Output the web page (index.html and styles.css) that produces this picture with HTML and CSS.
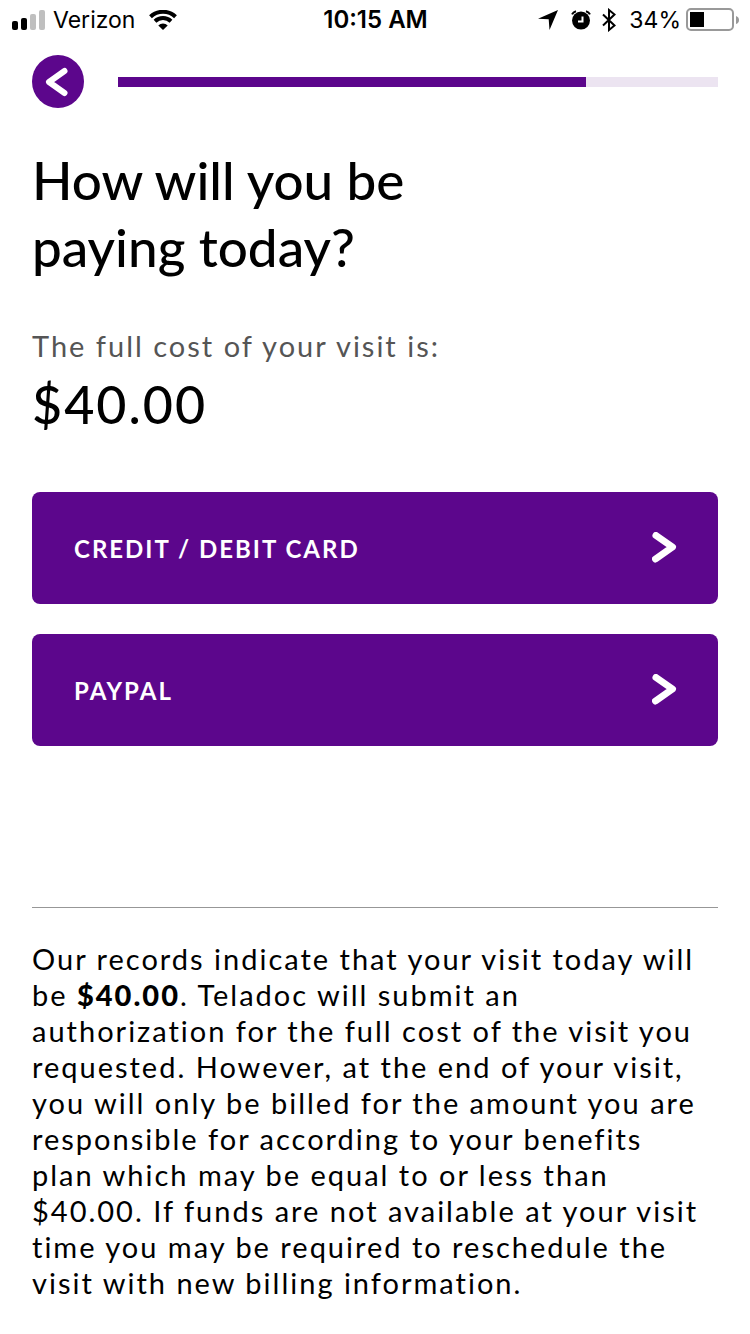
FILE: index.html
```html
<!DOCTYPE html>
<html lang="en">
<head>
<meta charset="utf-8">
<meta name="viewport" content="width=device-width, initial-scale=1">
<title>Payment</title>
<link rel="stylesheet" href="styles.css">
</head>
<body>
<header class="status">
  <div class="status-side">
    <svg class="signal" width="33" height="20" viewBox="0 0 33 20" aria-hidden="true">
      <rect x="0" y="11" width="6" height="9" rx="2"/>
      <rect x="9" y="8" width="6" height="12" rx="2"/>
      <rect class="dim" x="18" y="4" width="6" height="16" rx="2"/>
      <rect class="dim" x="27" y="0" width="6" height="20" rx="2"/>
    </svg>
    <span class="carrier">Verizon</span>
    <svg class="wifi" width="28" height="20" viewBox="0 0 28 20" aria-hidden="true">
      <path class="arc" d="M1.5 6.8a18 18 0 0 1 25 0M6 11.3a11.6 11.6 0 0 1 16 0"/>
      <path d="M14 20l-4.7-4.6a6.8 6.8 0 0 1 9.4 0z"/>
    </svg>
  </div>
  <time class="clock">10:15 AM</time>
  <div class="status-side status-right">
    <svg width="20" height="20" viewBox="0 0 20 20" aria-hidden="true"><path d="M20 0L11.5 20l-.8-10.7L0 8.7z"/></svg>
    <svg class="alarm" width="20" height="20" viewBox="0 0 20 20" aria-hidden="true">
      <circle cx="10" cy="10.6" r="9"/>
      <path class="bell" d="M1 4.4Q2.2 2 5 1.2M19 4.4Q17.800 2 15 1.200"/>
      <path class="hand" d="M11.500 6.500v5H7"/>
    </svg>
    <svg class="bluetooth" width="14" height="24" viewBox="0 0 14 24" aria-hidden="true"><path d="M1 6.500l11.500 11L7 22v-20l5.500 4.500L1 17.500"/></svg>
    <span class="percent">34%</span>
    <svg class="battery" width="53" height="24" viewBox="0 0 53 24" aria-hidden="true">
      <rect class="shell" x="1" y="1" width="46" height="21" rx="4"/>
      <rect x="4" y="4" width="14" height="15"/>
      <path class="cap" d="M50 8q3 1 3 4t-3 4z"/>
    </svg>
  </div>
</header>
<main class="page">
  <div class="nav">
    <button class="back" type="button" aria-label="Back">
      <svg width="52" height="53" viewBox="0 0 52 53" aria-hidden="true">
        <ellipse cx="26" cy="26.5" rx="26" ry="26.5"/>
        <path d="M32.500 16L17 27l15.500 11"/>
      </svg>
    </button>
    <div class="track" role="progressbar" aria-label="Progress" aria-valuenow="78" aria-valuemin="0" aria-valuemax="100"><div class="fill" style="width:78%"></div></div>
  </div>
  <h1 class="title">How will you be<br>paying today?</h1>
  <p class="label">The full cost of your visit is:</p>
  <p class="amount">$40.00</p>
  <div class="options">
    <button class="option" type="button"><span>CREDIT / DEBIT CARD</span>
      <svg width="26" height="32" viewBox="0 0 26 32" aria-hidden="true"><path d="M4 3.500L20.500 15 3.500 27"/></svg>
    </button>
    <button class="option" type="button"><span>PAYPAL</span>
      <svg width="26" height="32" viewBox="0 0 26 32" aria-hidden="true"><path d="M4 3.500L20.500 15 3.500 27"/></svg>
    </button>
  </div>
  <p class="note">Our records indicate that your visit today will<br>
    be <strong>$40.00</strong>. Teladoc will submit an<br>
    authorization for the full cost of the visit you<br>
    requested. However, at the end of your visit,<br>
    you will only be billed for the amount you are<br>
    responsible for according to your benefits<br>
    plan which may be equal to or less than<br>
    $40.00. If funds are not available at your visit<br>
    time you may be required to reschedule the<br>
    visit with new billing information.</p>
</main>
</body>
</html>
```
FILE: styles.css
```css
* { box-sizing: border-box; }
body {
  margin: 0;
  background: #fff;
  color: #000;
  font-family: Lato, "Open Sans", sans-serif;
}
h1, p { margin: 0; }
svg { display: block; flex: none; }
button { border: 0; padding: 0; font: inherit; cursor: pointer; }

.status {
  display: grid;
  grid-template-columns: 1fr auto 1fr;
  align-items: center;
  height: 40px;
  padding: 0 11px 0 12px;
  font: 400 23px/40px Inter, sans-serif;
}
.status-side { display: flex; align-items: center; }
.status-right { justify-content: flex-end; }
.dim { fill: #bfbfbf; }
.carrier { margin: 0 14px 0 8px; }
.clock { font-size: 24px; font-weight: 600; }
.arc { fill: none; stroke: #000; stroke-width: 4; }
.alarm { margin-left: 13px; }
.bell { fill: none; stroke: #000; stroke-width: 2; }
.hand { fill: none; stroke: #fff; stroke-width: 2; }
.bluetooth { margin: 0 13px 0 11px; fill: none; stroke: #000; stroke-width: 2; }
.battery { margin-left: 5px; }
.shell { fill: none; stroke: #999; stroke-width: 2; }
.cap { fill: #999; }

.page { padding: 15px 32px 30px; }
.nav { display: flex; align-items: center; gap: 34px; }
.back { background: none; border-radius: 50%; }
.back ellipse { fill: #5c068c; }
.back path { fill: none; stroke: #fff; stroke-width: 6; stroke-linecap: round; stroke-linejoin: round; }
.track { flex: 1; height: 10px; background: #ece4f1; }
.fill { height: 100%; background: #5c068c; }

.title { margin-top: 38px; font-size: 53px; line-height: 67px; font-weight: 500; }
.label { margin-top: 48px; font-size: 29px; line-height: 36px; color: #555; letter-spacing: 2px; }
.amount { margin-top: 8px; font-size: 52px; line-height: 64px; font-weight: 500; letter-spacing: 2px; }

.options { display: grid; gap: 30px; margin-top: 56px; }
.option {
  display: flex;
  align-items: center;
  justify-content: space-between;
  height: 112px;
  padding: 0 40px 0 42px;
  border-radius: 8px;
  background: #5c068c;
  color: #fff;
  font-size: 24px;
  font-weight: 700;
  letter-spacing: 2px;
}
.option path { fill: none; stroke: #fff; stroke-width: 7; stroke-linecap: round; stroke-linejoin: round; }

.note {
  margin-top: 161px;
  padding-top: 33px;
  border-top: 1px solid #979797;
  font-size: 29px;
  line-height: 36px;
  letter-spacing: 2px;
}
.note strong { font-weight: 900; }
```
